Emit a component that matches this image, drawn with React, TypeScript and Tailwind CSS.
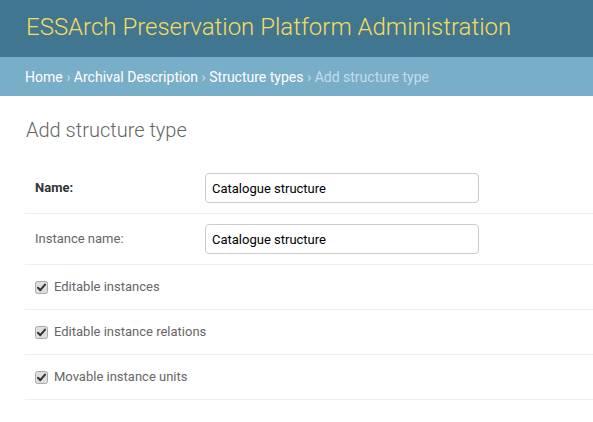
import React from 'react';

// Django-admin style "add" page for a structure type

const Checkbox = () => (
  <svg width="13" height="13" viewBox="0 0 13 13" className="shrink-0">
    <rect x="0.5" y="0.5" width="12" height="12" rx="2" fill="#dedede" stroke="#a9a9a9" />
    <path d="M3 6.8 L5.3 9.2 L10 3.6" fill="none" stroke="#333" strokeWidth="2" strokeLinecap="round" strokeLinejoin="round" />
  </svg>
);

const TextRow = ({ label, value, required }: { label: string; value: string; required?: boolean }) => (
  <div className="flex h-[51px] items-center border-b border-[#eeeeee] pl-[10px]">
    <label
      className={
        required
          ? 'w-[170px] shrink-0 text-[13px] font-bold text-[#333333]'
          : 'w-[170px] shrink-0 text-[13px] text-[#666666]'
      }
    >
      {label}
    </label>
    <input
      type="text"
      defaultValue={value}
      className="h-[30px] w-[274px] rounded-[4px] border border-[#cccccc] px-[6px] text-[13px] text-black outline-none"
    />
  </div>
);

const CheckRow = ({ label }: { label: string }) => (
  <div className="flex h-[45px] items-center gap-[6px] border-b border-[#eeeeee] pl-[10px]">
    <Checkbox />
    <span className="text-[13px] text-[#666666]">{label}</span>
  </div>
);

export default function App() {
  return (
    <div className="min-h-[422px] bg-white font-['Roboto','Liberation_Sans',sans-serif]">
      {/* header */}
      <div className="h-[57px] bg-[#417690] pl-[26px] pt-[13px]">
        <h1 className="text-[24px] leading-[28px] font-light text-[#f5dd5d]">
          ESSArch Preservation Platform Administration
        </h1>
      </div>

      {/* breadcrumbs */}
      <div className="h-[39px] bg-[#79aec8] pl-[25px] pt-[11px] text-[14px] leading-[19px] text-[#c4dce8]">
        <a className="text-white">Home</a> › <a className="text-white">Archival Description</a> ›{' '}
        <a className="text-white">Structure types</a> › Add structure type
      </div>

      {/* content */}
      <div className="pl-[25px]">
        <h1 className="mt-[22px] mb-[21px] pl-px text-[20px] leading-[24px] font-light text-[#666666]">
          Add structure type
        </h1>
        <TextRow label="Name:" value="Catalogue structure" required />
        <TextRow label="Instance name:" value="Catalogue structure" />
        <CheckRow label="Editable instances" />
        <CheckRow label="Editable instance relations" />
        <CheckRow label="Movable instance units" />
      </div>
    </div>
  );
}
